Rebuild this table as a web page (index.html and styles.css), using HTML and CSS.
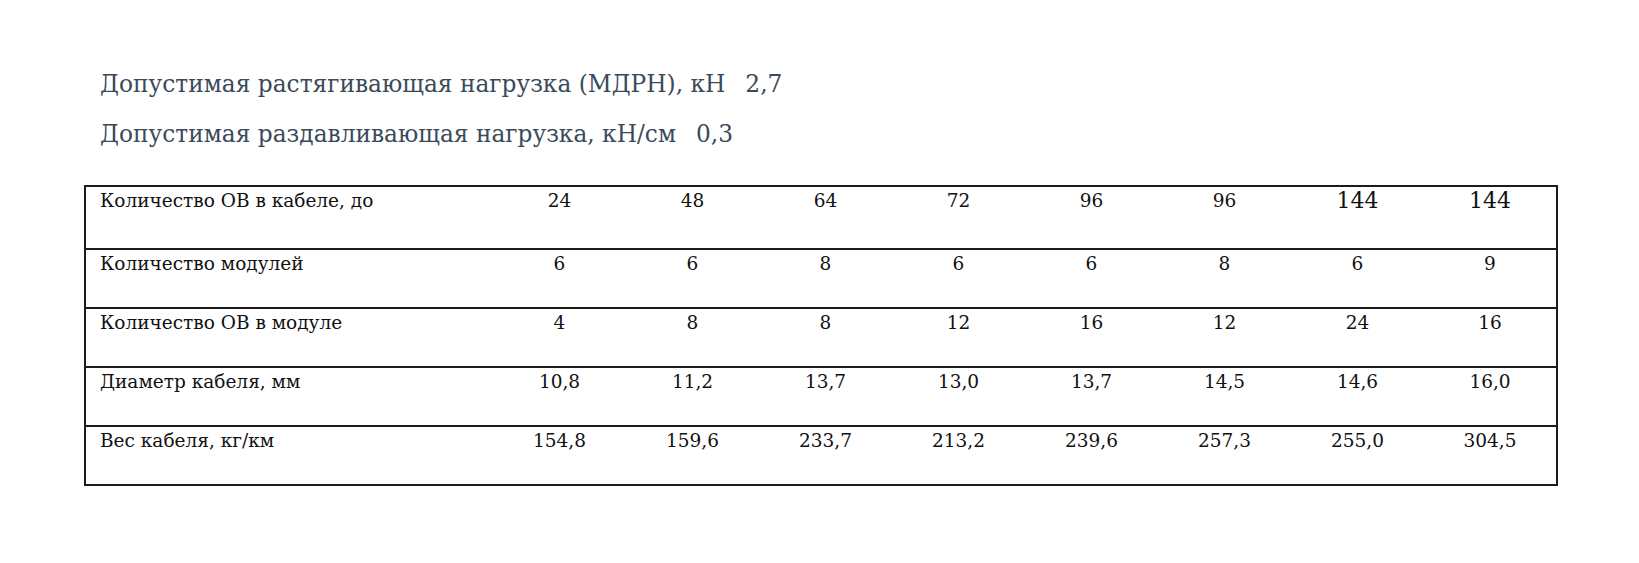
FILE: index.html
```html
<!DOCTYPE html>
<html lang="ru">

<head>
    <meta charset="UTF-8">
    <meta name="viewport" content="width=device-width, initial-scale=1.0">
    <title>Характеристики кабеля</title>
    <link rel="stylesheet" href="styles.css">
</head>

<body>
    <div class="specs">
        <p class="spec-line">Допустимая растягивающая нагрузка (МДРН), кН<span class="spec-value">2,7</span></p>
        <p class="spec-line">Допустимая раздавливающая нагрузка, кН/см<span class="spec-value">0,3</span></p>
    </div>

    <table class="cable-table">
        <colgroup>
            <col class="col-label">
            <col span="8" class="col-value">
        </colgroup>
        <tr class="row-first">
            <td>Количество ОВ в кабеле, до</td>
            <td>24</td>
            <td>48</td>
            <td>64</td>
            <td>72</td>
            <td>96</td>
            <td>96</td>
            <td class="big">144</td>
            <td class="big">144</td>
        </tr>
        <tr>
            <td>Количество модулей</td>
            <td>6</td>
            <td>6</td>
            <td>8</td>
            <td>6</td>
            <td>6</td>
            <td>8</td>
            <td>6</td>
            <td>9</td>
        </tr>
        <tr>
            <td>Количество ОВ в модуле</td>
            <td>4</td>
            <td>8</td>
            <td>8</td>
            <td>12</td>
            <td>16</td>
            <td>12</td>
            <td>24</td>
            <td>16</td>
        </tr>
        <tr>
            <td>Диаметр кабеля, мм</td>
            <td>10,8</td>
            <td>11,2</td>
            <td>13,7</td>
            <td>13,0</td>
            <td>13,7</td>
            <td>14,5</td>
            <td>14,6</td>
            <td>16,0</td>
        </tr>
        <tr>
            <td>Вес кабеля, кг/км</td>
            <td>154,8</td>
            <td>159,6</td>
            <td>233,7</td>
            <td>213,2</td>
            <td>239,6</td>
            <td>257,3</td>
            <td>255,0</td>
            <td>304,5</td>
        </tr>
    </table>
</body>

</html>
```

FILE: styles.css
```css
:root {
    --heading-color: #3a4a5a;
    /* Slate grey for the spec lines */
    --text-color: #111111;
    --line-color: #1c1c1c;
}

* {
    box-sizing: border-box;
    margin: 0;
    padding: 0;
}

body {
    background-color: #ffffff;
    color: var(--text-color);
    font-family: "DejaVu Serif", "Liberation Serif", serif;
    padding-top: 64px;
}

.specs {
    padding-left: 100px;
    display: flex;
    flex-direction: column;
    gap: 10px;
}

.spec-line {
    color: var(--heading-color);
    font-size: 23.3px;
    line-height: 40px;
}

.spec-value {
    margin-left: 20px;
}

.cable-table {
    margin-top: 31px;
    margin-left: 84px;
    width: 1473px;
    border-collapse: collapse;
    table-layout: fixed;
    border: 2px solid var(--line-color);
}

.col-label {
    width: 408px;
}

.col-value {
    width: 133px;
}

.cable-table tr {
    height: 59px;
    border-top: 2px solid var(--line-color);
}

.cable-table tr.row-first {
    height: 63px;
}

.cable-table td {
    vertical-align: top;
    padding-top: 2px;
    font-size: 18.5px;
    line-height: 24px;
    text-align: center;
}

.cable-table td:first-child {
    text-align: left;
    padding-left: 14px;
}

.cable-table td.big {
    font-size: 22px;
}
```
